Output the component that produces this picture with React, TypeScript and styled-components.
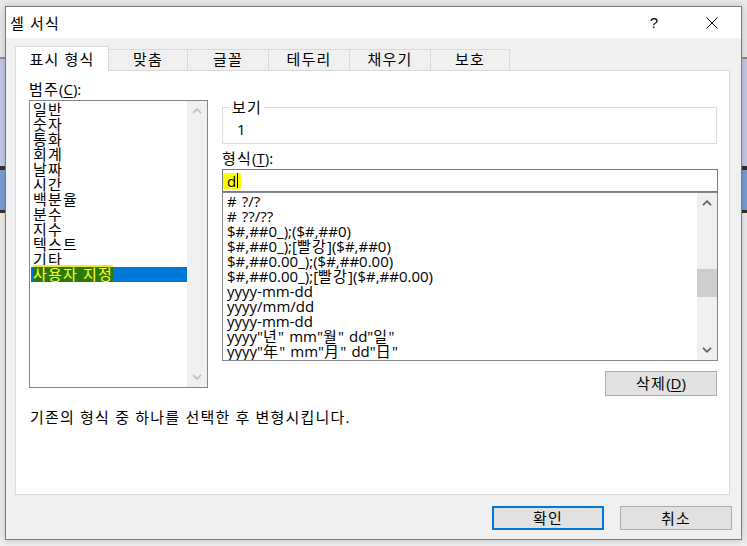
import React from "react";
import styled, { createGlobalStyle, css } from "styled-components";

const GlobalStyle = createGlobalStyle`
  html, body {
    margin: 0;
    padding: 0;
    height: 100%;
    overflow: hidden;
  }
  body {
    font-family: "Open Sans", "Noto Sans CJK KR", sans-serif;
    font-size: 15px;
    color: #000;
    background: linear-gradient(
      to bottom,
      #ebebeb 0, #ebebeb 57px,
      #8c8c8c 57px, #8c8c8c 59px,
      #c9cbe9 59px, #c9cbe9 166px,
      #3a3226 166px, #3a3226 170px,
      #79a3d9 170px, #79a3d9 210px,
      #3a3226 210px, #3a3226 213px,
      #efefef 213px
    );
  }
`;

const categories = ["일반", "숫자", "통화", "회계", "날짜", "시간", "백분율", "분수", "지수", "텍스트", "기타", "사용자 지정"];

const formats = [
  "# ?/?",
  "# ??/??",
  "$#,##0_);($#,##0)",
  "$#,##0_);[빨강]($#,##0)",
  "$#,##0.00_);($#,##0.00)",
  "$#,##0.00_);[빨강]($#,##0.00)",
  "yyyy-mm-dd",
  "yyyy/mm/dd",
  "yyyy-mm-dd",
  'yyyy"년" mm"월" dd"일"',
  'yyyy"年" mm"月" dd"日"',
];

const tabs = [
  { label: "표시 형식", width: 94 },
  { label: "맞춤", width: 79 },
  { label: "글꼴", width: 81 },
  { label: "테두리", width: 81 },
  { label: "채우기", width: 81 },
  { label: "보호", width: 79 },
];

// the dialog font (Gulim) sets hangul on a full 15px cell, Noto's are narrower
const Wide = styled.span`
  letter-spacing: 1.2px;
`;

const WIDE_RUN = /([\u1100-\u11ff\u3130-\u318f\uac00-\ud7af\u4e00-\u9fff ]+)/;

const Txt = ({ children }: { children: string }) => (
  <>
    {children.split(WIDE_RUN).map((part, i) => (i % 2 ? <Wide key={i}>{part}</Wide> : part))}
  </>
);

const Page = styled.div`
  padding: 6px 0 0 5px;
`;

const Dialog = styled.div`
  box-sizing: border-box;
  width: 737px;
  height: 534px;
  border: 1px solid #7a7a7a;
  background: #f0f0f0;
  display: flex;
  flex-direction: column;
  box-shadow: 0 0 8px rgba(0, 0, 0, 0.22);
`;

const TitleBar = styled.div`
  height: 31px;
  background: #fff;
  display: flex;
  align-items: center;
`;

const Title = styled.div`
  flex: 1;
  padding-left: 4px;
  line-height: 16px;
`;

const TitleButton = styled.div<{ $gap: number }>`
  width: 46px;
  height: 31px;
  margin-right: ${(p) => p.$gap}px;
  display: flex;
  align-items: center;
  justify-content: center;
  font-family: "Liberation Sans", sans-serif;
  font-size: 15px;
`;

const Body = styled.div`
  flex: 1;
  display: flex;
  flex-direction: column;
  padding: 8px 11px 0 9px;
`;

const TabStrip = styled.div`
  display: flex;
  align-items: flex-end;
  height: 24px;
`;

const Tab = styled.div<{ $active?: boolean; $w: number }>`
  box-sizing: border-box;
  width: ${(p) => p.$w}px;
  text-align: center;
  line-height: 15px;
  white-space: nowrap;
  border: 1px solid #d9d9d9;
  border-bottom: none;
  ${(p) =>
    p.$active
      ? css`
          height: 25px;
          padding-top: 5px;
          background: #fff;
          margin-bottom: -1px;
          position: relative;
          z-index: 1;
        `
      : css`
          height: 21px;
          padding-top: 2px;
          background: #f0f0f0;
          border-left: none;
        `}
`;

const Panel = styled.div`
  box-sizing: border-box;
  height: 425px;
  background: #fff;
  border: 1px solid #d9d9d9;
  padding: 9px 11px 0 13px;
  display: flex;
  flex-direction: column;
`;

const Columns = styled.div`
  display: flex;
  gap: 14px;
`;

const LeftCol = styled.div`
  width: 179px;
  display: flex;
  flex-direction: column;
`;

const RightCol = styled.div`
  width: 496px;
  display: flex;
  flex-direction: column;
`;

const FieldLabel = styled.div<{ $top?: number }>`
  line-height: 18px;
  margin-top: ${(p) => p.$top ?? 0}px;
  margin-bottom: 2px;
`;

const U = styled.span`
  text-decoration: underline;
  text-underline-offset: 2px;
`;

const ListBox = styled.div<{ $h: number }>`
  box-sizing: border-box;
  height: ${(p) => p.$h}px;
  border: 1px solid #828790;
  background: #fff;
  display: flex;
`;

const ListItems = styled.div<{ $pl: number }>`
  flex: 1;
  padding: 1px 0 0 ${(p) => p.$pl}px;
  overflow: hidden;
`;

const Item = styled.div<{ $selected?: boolean; $indent: number }>`
  height: 15px;
  line-height: 15px;
  padding-left: ${(p) => p.$indent}px;
  white-space: nowrap;
  background: ${(p) => (p.$selected ? "#0078d7" : "transparent")};
`;

const CategoryMark = styled.span`
  display: inline-block;
  height: 17px;
  line-height: 15px;
  margin-top: -2px;
  padding-top: 2px;
  box-sizing: border-box;
  background: linear-gradient(to bottom, #eded1a 0, #eded1a 2px, #2b7a08 2px);
  color: #ffff2e;
  border-radius: 2px;
`;

const ScrollBar = styled.div`
  width: 20px;
  background: #f0f0f0;
  display: flex;
  flex-direction: column;
`;

const ScrollArrow = styled.div`
  height: 20px;
  display: flex;
  align-items: center;
  justify-content: center;
`;

const Track = styled.div`
  flex: 1;
`;

const Thumb = styled.div`
  height: 28px;
  background: #cdcdcd;
`;

const GroupBox = styled.fieldset`
  margin: 20px 1px 0 0;
  padding: 7px 0 6px 14px;
  border: 1px solid #dcdcdc;
  min-width: 0;
`;

const Legend = styled.legend`
  padding: 0 2px;
  margin-left: -7px;
  line-height: 15px;
`;

const Sample = styled.div`
  line-height: 15px;
`;

const TextInput = styled.div`
  box-sizing: border-box;
  height: 23px;
  border: 1px solid #7a7a7a;
  background: #fff;
  padding-left: 4px;
  display: flex;
  align-items: center;
`;

const InputMark = styled.span`
  display: inline-flex;
  align-items: center;
  height: 16px;
  line-height: 16px;
  margin-left: -4px;
  padding: 0 3px 0 4px;
  background: #ffff00;
  border-radius: 2px;
`;

const Caret = styled.span`
  display: inline-block;
  width: 1px;
  height: 15px;
  margin-left: 1px;
  background: #000;
`;

const Button = styled.button<{ $primary?: boolean; $w: number; $h: number }>`
  box-sizing: border-box;
  width: ${(p) => p.$w}px;
  height: ${(p) => p.$h}px;
  padding: 0;
  background: #e1e1e1;
  border: ${(p) => (p.$primary ? "2px solid #0078d7" : "1px solid #adadad")};
  font: inherit;
  line-height: 15px;
  color: #000;
`;

const DeleteRow = styled.div`
  display: flex;
  justify-content: flex-end;
  margin: 10px 1px 0 0;
`;

const Description = styled.div`
  margin-top: 12px;
  padding-left: 1px;
  line-height: 18px;
`;

const Footer = styled.div`
  display: flex;
  justify-content: flex-end;
  gap: 16px;
  margin: 11px -2px 0 0;
`;

const Chevron = ({ up, color }: { up?: boolean; color: string }) => (
  <svg width="10" height="6" viewBox="0 0 10 6">
    <path
      d={up ? "M1 5.2 L5 1.2 L9 5.2" : "M1 0.8 L5 4.8 L9 0.8"}
      fill="none"
      stroke={color}
      strokeWidth="1.7"
    />
  </svg>
);

const VScroll = ({ color, thumbTop }: { color: string; thumbTop?: number }) => (
  <ScrollBar>
    <ScrollArrow>
      <Chevron up color={color} />
    </ScrollArrow>
    <Track>{thumbTop !== undefined && <Thumb style={{ marginTop: thumbTop }} />}</Track>
    <ScrollArrow>
      <Chevron color={color} />
    </ScrollArrow>
  </ScrollBar>
);

export default function App() {
  const trackHeight = 126;
  const scrollRatio = 0.445;
  const thumbTop = Math.round(trackHeight * scrollRatio);

  return (
    <>
      <GlobalStyle />
      <Page>
        <Dialog>
          <TitleBar>
            <Title>
              <Txt>셀 서식</Txt>
            </Title>
            <TitleButton $gap={12}>?</TitleButton>
            <TitleButton $gap={6}>
              <svg width="12" height="12" viewBox="0 0 12 12">
                <path d="M0.5 0.5 L11.5 11.5 M11.5 0.5 L0.5 11.5" stroke="#000" strokeWidth="1" />
              </svg>
            </TitleButton>
          </TitleBar>
          <Body>
            <TabStrip>
              {tabs.map((t, i) => (
                <Tab key={t.label} $active={i === 0} $w={t.width}>
                  <Txt>{t.label}</Txt>
                </Tab>
              ))}
            </TabStrip>
            <Panel>
              <Columns>
                <LeftCol>
                  <FieldLabel>
                    <Wide>범주</Wide>(<U>C</U>):
                  </FieldLabel>
                  <ListBox $h={288}>
                    <ListItems $pl={1}>
                      {categories.map((c, i) => {
                        const selected = i === categories.length - 1;
                        return (
                          <Item key={c} $indent={2} $selected={selected}>
                            {selected ? (
                              <CategoryMark>
                                <Txt>{c}</Txt>
                              </CategoryMark>
                            ) : (
                              <Txt>{c}</Txt>
                            )}
                          </Item>
                        );
                      })}
                    </ListItems>
                    <VScroll color="#c2c2c2" />
                  </ListBox>
                </LeftCol>
                <RightCol>
                  <GroupBox>
                    <Legend>
                      <Txt>보기</Txt>
                    </Legend>
                    <Sample>1</Sample>
                  </GroupBox>
                  <FieldLabel $top={5}>
                    <Wide>형식</Wide>(<U>T</U>):
                  </FieldLabel>
                  <TextInput>
                    <InputMark>
                      d
                      <Caret />
                    </InputMark>
                  </TextInput>
                  <ListBox $h={169}>
                    <ListItems $pl={0}>
                      {formats.map((f, i) => (
                        <Item key={i} $indent={4}>
                          <Txt>{f}</Txt>
                        </Item>
                      ))}
                    </ListItems>
                    <VScroll color="#606060" thumbTop={thumbTop} />
                  </ListBox>
                  <DeleteRow>
                    <Button $w={112} $h={25}>
                      <Wide>삭제</Wide>(<U>D</U>)
                    </Button>
                  </DeleteRow>
                </RightCol>
              </Columns>
              <Description>
                <Txt>기존의 형식 중 하나를 선택한 후 변형시킵니다.</Txt>
              </Description>
            </Panel>
            <Footer>
              <Button $primary $w={112} $h={24}>
                <Txt>확인</Txt>
              </Button>
              <Button $w={112} $h={24}>
                <Txt>취소</Txt>
              </Button>
            </Footer>
          </Body>
        </Dialog>
      </Page>
    </>
  );
}
